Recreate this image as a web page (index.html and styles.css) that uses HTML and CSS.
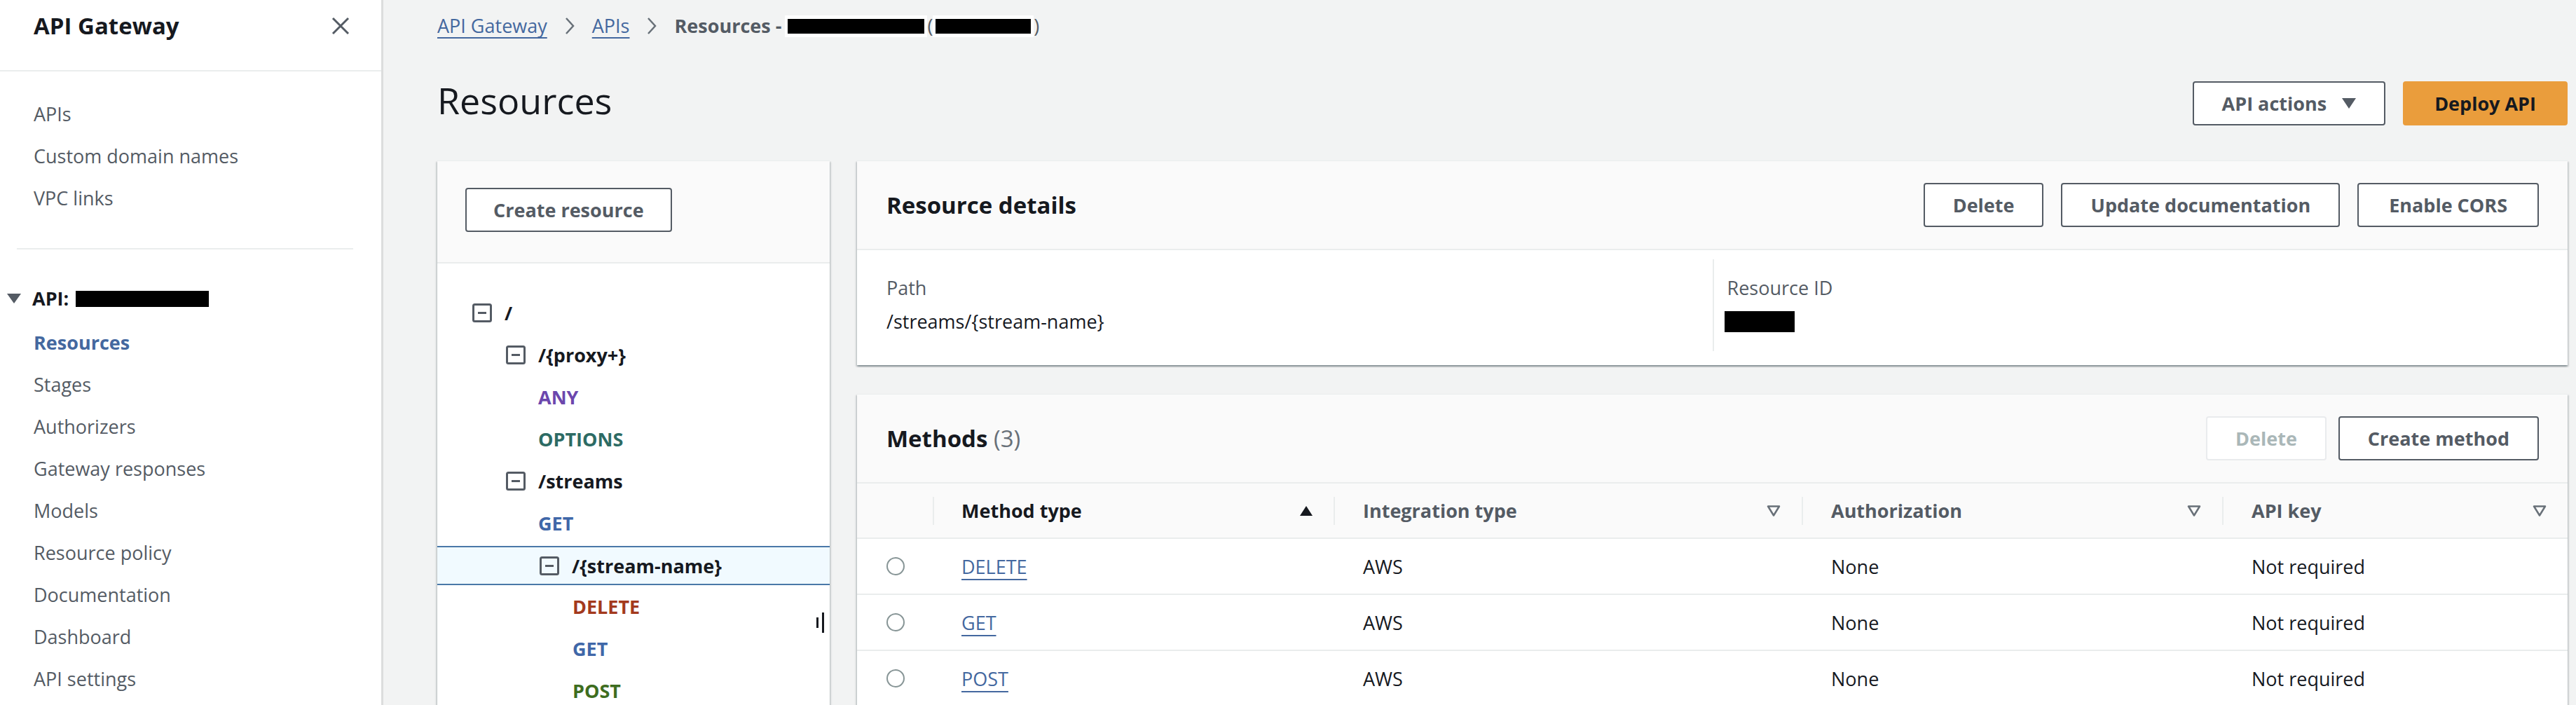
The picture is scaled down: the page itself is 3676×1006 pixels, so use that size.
FILE: index.html
```html
<!DOCTYPE html>
<html lang="en">
<head>
<meta charset="utf-8">
<title>Resources - API Gateway</title>
<link rel="stylesheet" href="styles.css">
</head>
<body>
<div class="app">
  <nav class="sidebar">
    <div class="side-head">
      <span class="side-title">API Gateway</span>
      <svg class="close" width="26" height="26" viewBox="0 0 26 26"><path d="M2 2 L24 24 M24 2 L2 24" stroke="#545b64" stroke-width="3" fill="none"/></svg>
    </div>
    <ul class="nav-list nav-top">
      <li>APIs</li>
      <li>Custom domain names</li>
      <li>VPC links</li>
    </ul>
    <div class="side-div"></div>
    <div class="api-group">
      <svg class="tri" width="20" height="14" viewBox="0 0 20 14"><path d="M0 0 H20 L10 14 Z" fill="#545b64"/></svg>
      <span class="api-label">API:</span>
      <span class="redact-side"></span>
    </div>
    <ul class="nav-list nav-api">
      <li class="active">Resources</li>
      <li>Stages</li>
      <li>Authorizers</li>
      <li>Gateway responses</li>
      <li>Models</li>
      <li>Resource policy</li>
      <li>Documentation</li>
      <li>Dashboard</li>
      <li>API settings</li>
    </ul>
  </nav>

  <main class="main">
    <div class="crumbs">
      <a class="crumb-link">API Gateway</a>
      <svg class="chev" width="20" height="26" viewBox="0 0 20 26"><path d="M5 2 L15 13 L5 24" stroke="#687078" stroke-width="2.5" fill="none"/></svg>
      <a class="crumb-link">APIs</a>
      <svg class="chev" width="20" height="26" viewBox="0 0 20 26"><path d="M5 2 L15 13 L5 24" stroke="#687078" stroke-width="2.5" fill="none"/></svg>
      <span class="crumb-cur">Resources -</span>
      <span class="redact-crumb r1"></span><span class="paren">(</span><span class="redact-crumb r2"></span><span class="paren">)</span>
    </div>

    <div class="page-head">
      <h1>Resources</h1>
      <div class="actions">
        <button class="btn">API actions
          <svg width="20" height="15" viewBox="0 0 20 15"><path d="M0 0 H20 L10 15 Z" fill="#545b64"/></svg>
        </button>
        <button class="btn btn-primary">Deploy API</button>
      </div>
    </div>

    <div class="split">
      <section class="tree-panel">
        <div class="tree-head">
          <button class="btn">Create resource</button>
        </div>
        <div class="tree-body">
          <div class="node lv0"><svg class="tog" width="28" height="27" viewBox="0 0 28 27"><rect x="1.5" y="1.5" width="25" height="24" rx="2" stroke="#545b64" stroke-width="3" fill="none"/><path d="M8 13.5 H20" stroke="#545b64" stroke-width="3"/></svg>/</div>
          <div class="node lv1"><svg class="tog" width="28" height="27" viewBox="0 0 28 27"><rect x="1.5" y="1.5" width="25" height="24" rx="2" stroke="#545b64" stroke-width="3" fill="none"/><path d="M8 13.5 H20" stroke="#545b64" stroke-width="3"/></svg>/{proxy+}</div>
          <div class="node m1 any">ANY</div>
          <div class="node m1 options">OPTIONS</div>
          <div class="node lv1"><svg class="tog" width="28" height="27" viewBox="0 0 28 27"><rect x="1.5" y="1.5" width="25" height="24" rx="2" stroke="#545b64" stroke-width="3" fill="none"/><path d="M8 13.5 H20" stroke="#545b64" stroke-width="3"/></svg>/streams</div>
          <div class="node m1 get">GET</div>
          <div class="node lv2 selected"><svg class="tog" width="28" height="27" viewBox="0 0 28 27"><rect x="1.5" y="1.5" width="25" height="24" rx="2" stroke="#545b64" stroke-width="3" fill="none"/><path d="M8 13.5 H20" stroke="#545b64" stroke-width="3"/></svg>/{stream-name}</div>
          <div class="node m2 delete">DELETE</div>
          <div class="node m2 get">GET</div>
          <div class="node m2 post">POST</div>
        </div>
        <div class="resize-handle"><span class="bar-s"></span><span class="bar-l"></span></div>
      </section>

      <div class="right-col">
        <section class="panel">
          <div class="panel-head">
            <h2>Resource details</h2>
            <div class="btns">
              <button class="btn">Delete</button>
              <button class="btn">Update documentation</button>
              <button class="btn btn-wide">Enable CORS</button>
            </div>
          </div>
          <div class="details">
            <div class="kv">
              <div class="k">Path</div>
              <div class="v">/streams/{stream-name}</div>
            </div>
            <div class="kv kv-2">
              <div class="k">Resource ID</div>
              <div class="v"><span class="redact-id"></span></div>
            </div>
          </div>
        </section>

        <section class="panel">
          <div class="panel-head">
            <h2>Methods <span class="count">(3)</span></h2>
            <div class="btns btns-tight">
              <button class="btn btn-disabled">Delete</button>
              <button class="btn">Create method</button>
            </div>
          </div>
          <table class="mtable">
            <colgroup>
              <col class="c-radio"><col class="c-type"><col class="c-int"><col class="c-auth"><col>
            </colgroup>
            <thead>
              <tr>
                <th></th>
                <th class="sep sorted"><div class="th-in">Method type<svg width="18" height="14" viewBox="0 0 18 14"><path d="M9 0 L18 14 H0 Z" fill="#16191f"/></svg></div></th>
                <th class="sep"><div class="th-in">Integration type<svg class="filt" width="20" height="16" viewBox="0 0 20 16"><path d="M2 1.5 H18 L10 14.5 Z" stroke="#687078" stroke-width="2.5" fill="none" stroke-linejoin="round"/></svg></div></th>
                <th class="sep"><div class="th-in">Authorization<svg class="filt" width="20" height="16" viewBox="0 0 20 16"><path d="M2 1.5 H18 L10 14.5 Z" stroke="#687078" stroke-width="2.5" fill="none" stroke-linejoin="round"/></svg></div></th>
                <th class="sep"><div class="th-in">API key<svg class="filt" width="20" height="16" viewBox="0 0 20 16"><path d="M2 1.5 H18 L10 14.5 Z" stroke="#687078" stroke-width="2.5" fill="none" stroke-linejoin="round"/></svg></div></th>
              </tr>
            </thead>
            <tbody>
              <tr><td><span class="radio"></span></td><td><a class="mlink">DELETE</a></td><td>AWS</td><td>None</td><td>Not required</td></tr>
              <tr><td><span class="radio"></span></td><td><a class="mlink">GET</a></td><td>AWS</td><td>None</td><td>Not required</td></tr>
              <tr><td><span class="radio"></span></td><td><a class="mlink">POST</a></td><td>AWS</td><td>None</td><td>Not required</td></tr>
            </tbody>
          </table>
        </section>
      </div>
    </div>
  </main>
</div>
</body>
</html>
```

FILE: styles.css
```css
* { box-sizing: border-box; }

html, body {
  margin: 0;
  height: 100%;
  overflow: hidden;
}

body {
  font-family: "Open Sans", "Noto Sans", sans-serif;
  font-size: 27px;
  color: #16191f;
  background: #f2f3f3;
}

.app {
  display: flex;
  height: 100%;
}

/* ---------- Sidebar ---------- */
.sidebar {
  width: 547px;
  flex: none;
  background: #fff;
  border-right: 3px solid #dcdddd;
}

.side-head {
  display: flex;
  justify-content: space-between;
  align-items: center;
  padding: 17px 45px 43px 48px;
  border-bottom: 2px solid #eaeded;
}

.side-title {
  font-size: 33px;
  font-weight: 700;
  line-height: 40px;
  color: #16191f;
}

.close { display: block; }

.nav-list {
  list-style: none;
  margin: 0;
  padding: 0 0 0 48px;
}

.nav-list li {
  line-height: 60px;
  color: #545b64;
}

.nav-top { padding-top: 31px; }

.nav-api { margin-top: 3px; }

.nav-api li.active {
  color: #44689f;
  font-weight: 700;
}

.side-div {
  height: 2px;
  background: #eaeded;
  margin: 41px 40px 0 24px;
}

.api-group {
  display: flex;
  align-items: center;
  margin-top: 40px;
  padding-left: 10px;
  line-height: 60px;
}

.tri { margin-right: 16px; }

.api-label {
  font-weight: 700;
  color: #16191f;
}

.redact-side {
  width: 190px;
  height: 23px;
  background: #000;
  margin-left: 10px;
}

/* ---------- Main ---------- */
.main {
  flex: 1;
  min-width: 0;
  padding: 17px 12px 0 77px;
}

.crumbs {
  display: flex;
  align-items: center;
  height: 40px;
  line-height: 40px;
}

.crumb-link {
  color: #44689f;
  text-decoration: underline;
  text-decoration-thickness: 2px;
  text-underline-offset: 6px;
}

.chev { margin: 0 22px; display: block; }

.crumb-cur {
  color: #545b64;
  font-weight: 700;
}

.redact-crumb {
  display: inline-block;
  height: 31px;
  background: #000;
  border: 5px solid #fff;
  border-width: 5px 4px;
}
.redact-crumb.r1 { width: 203px; margin-left: 5px; }
.redact-crumb.r2 { width: 144px; }

.paren { color: #545b64; }

.page-head {
  display: flex;
  justify-content: space-between;
  align-items: flex-start;
  margin-top: 56px;
}

h1 {
  margin: 0;
  font-size: 52px;
  font-weight: 400;
  line-height: 60px;
  color: #16191f;
}

.actions {
  display: flex;
  gap: 25px;
  margin-top: 3px;
}

.btn {
  display: inline-flex;
  align-items: center;
  gap: 22px;
  height: 63px;
  padding: 0 40px;
  border: 2px solid #545b64;
  border-radius: 4px;
  background: #fff;
  font-family: "Open Sans", "Noto Sans", sans-serif;
  font-size: 27px;
  font-weight: 700;
  color: #545b64;
  white-space: nowrap;
}

.btn-wide { padding: 0 43px; }

.btn-primary {
  padding: 0 43px;
  background: #ea9d3c;
  border-color: #ea9d3c;
  color: #16191f;
}

.btn-disabled {
  border-color: #e9ebed;
  color: #aab7b8;
}

.split {
  display: flex;
  gap: 39px;
  margin-top: 50px;
  align-items: flex-start;
}

/* ---------- Tree panel ---------- */
.tree-panel {
  position: relative;
  width: 560px;
  flex: none;
  min-height: 900px;
  background: #fff;
  box-shadow: 0 2px 2px rgba(0, 28, 36, 0.3), 2px 2px 2px rgba(0, 28, 36, 0.12), -2px 2px 2px rgba(0, 28, 36, 0.12);
  border-top: 1px solid #eaeded;
}

.tree-head {
  background: #fafafa;
  padding: 38px 40px 43px;
  border-bottom: 2px solid #eaeded;
}

.tree-head .btn { padding: 0 38px; }

.tree-body { padding-top: 40px; }

.node {
  display: flex;
  align-items: center;
  height: 60px;
  font-weight: 700;
  color: #16191f;
  white-space: nowrap;
}

.tog { display: block; margin-right: 18px; flex: none; }

.lv0 { padding-left: 50px; }
.lv1 { padding-left: 98px; }
.lv2 { padding-left: 146px; }
.m1 { padding-left: 144px; }
.m2 { padding-left: 193px; }

.node.selected {
  height: 56px;
  margin-top: 3px;
  background: #f1faff;
  border-top: 2px solid #4a78a8;
  border-bottom: 2px solid #4a78a8;
}

.any { color: #6c47ad; }
.options { color: #2d6b64; }
.get { color: #3f67a8; }
.delete { color: #a3391d; }
.post { color: #3e6d1f; }

.resize-handle {
  position: absolute;
  top: 644px;
  right: 8px;
  display: flex;
  align-items: center;
  gap: 5px;
}
.bar-s { width: 3px; height: 15px; background: #16191f; }
.bar-l { width: 3px; height: 29px; background: #16191f; }

/* ---------- Right column ---------- */
.right-col {
  flex: 1;
  min-width: 0;
  display: flex;
  flex-direction: column;
  gap: 41px;
}

.panel {
  background: #fff;
  box-shadow: 0 2px 2px rgba(0, 28, 36, 0.3), 2px 2px 2px rgba(0, 28, 36, 0.12), -2px 2px 2px rgba(0, 28, 36, 0.12);
  border-top: 1px solid #eaeded;
}

.panel-head {
  display: flex;
  align-items: center;
  justify-content: space-between;
  height: 127px;
  padding: 0 41px 0 42px;
  background: #fafafa;
  border-bottom: 2px solid #eaeded;
}

h2 {
  margin: 0;
  font-size: 33px;
  font-weight: 700;
  line-height: 40px;
  color: #16191f;
}

.count {
  font-weight: 400;
  color: #687078;
}

.btns { display: flex; gap: 25px; }
.btns-tight { gap: 17px; }

.details {
  display: grid;
  grid-template-columns: 1fr 1fr;
  padding: 13px 42px 20px;
}

.kv { padding: 17px 0 18px; }

.kv-2 {
  border-left: 2px solid #eaeded;
  padding-left: 19px;
}

.k {
  line-height: 48px;
  color: #545b64;
}

.v {
  line-height: 48px;
  height: 48px;
  color: #16191f;
  display: flex;
  align-items: center;
}

.redact-id {
  width: 100px;
  height: 30px;
  background: #000;
  margin-left: -4px;
}

/* ---------- Methods table ---------- */
.mtable {
  width: 100%;
  border-collapse: collapse;
  table-layout: fixed;
}

.c-radio { width: 108px; }
.c-type { width: 572px; }
.c-int { width: 668px; }
.c-auth { width: 600px; }

.mtable th {
  position: relative;
  height: 78px;
  padding: 0 0 0 42px;
  background: #fafafa;
  border-bottom: 2px solid #eaeded;
  text-align: left;
  font-weight: 700;
  color: #545b64;
}

.mtable th.sorted { color: #16191f; padding-left: 41px; }

.mtable th.sep::before {
  content: "";
  position: absolute;
  left: 0;
  top: 19px;
  width: 2px;
  height: 40px;
  background: #eaeded;
}

.th-in {
  display: flex;
  justify-content: space-between;
  align-items: center;
  padding-right: 30px;
}

.mtable td {
  height: 80px;
  padding: 0 0 0 42px;
  border-bottom: 2px solid #eaeded;
  color: #16191f;
  vertical-align: middle;
  white-space: nowrap;
}

.mtable td:nth-child(2) { padding-left: 41px; }

.radio {
  display: block;
  width: 26px;
  height: 26px;
  border: 2px solid #879596;
  border-radius: 50%;
}

.mlink {
  color: #44689f;
  text-decoration: underline;
  text-decoration-thickness: 2px;
  text-underline-offset: 7px;
}
```
